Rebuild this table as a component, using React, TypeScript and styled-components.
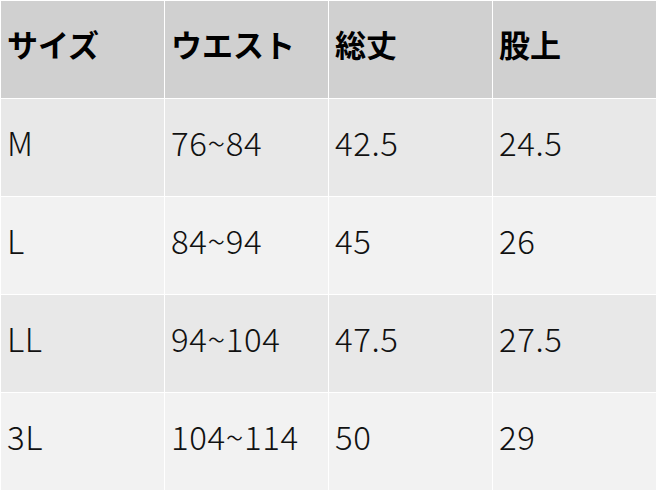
import React from 'react';
import styled, { createGlobalStyle } from 'styled-components';

const GlobalStyle = createGlobalStyle`
  html, body {
    margin: 0;
    padding: 0;
    background: #ffffff;
  }
`;

const headers = ['サイズ', 'ウエスト', '総丈', '股上'];

const rows = [
  ['M', '76~84', '42.5', '24.5'],
  ['L', '84~94', '45', '26'],
  ['LL', '94~104', '47.5', '27.5'],
  ['3L', '104~114', '50', '29']
];

const App: React.FC = () => (
  <>
    <GlobalStyle />
    <Table>
      <thead>
        <tr>
          {headers.map(h => (
            <HeadCell key={h}>{h}</HeadCell>
          ))}
        </tr>
      </thead>
      <tbody>
        {rows.map((row, i) => (
          <tr key={row[0]}>
            {row.map((cell, j) => (
              <Cell key={j} striped={i % 2 === 0}>
                {cell}
              </Cell>
            ))}
          </tr>
        ))}
      </tbody>
    </Table>
  </>
);

const Table = styled.table`
  width: 657px;
  border-collapse: separate;
  border-spacing: 1px;
  table-layout: fixed;
  background: #ffffff;
  font-family: 'Noto Sans CJK JP', 'Noto Sans', sans-serif;
  font-size: 33px;
  color: #111111;
`;

const HeadCell = styled.th`
  height: 97px;
  padding: 0 0 12px 6px;
  box-sizing: border-box;
  text-align: left;
  font-weight: 700;
  font-size: 31px;
  color: #000000;
  background: #d0d0d0;
`;

const Cell = styled.td<{ striped: boolean }>`
  height: 97px;
  padding: 0 0 12px 6px;
  box-sizing: border-box;
  font-weight: 300;
  letter-spacing: 0.6px;
  background: ${props => (props.striped ? '#e8e8e8' : '#f2f2f2')};
`;

export default App;
